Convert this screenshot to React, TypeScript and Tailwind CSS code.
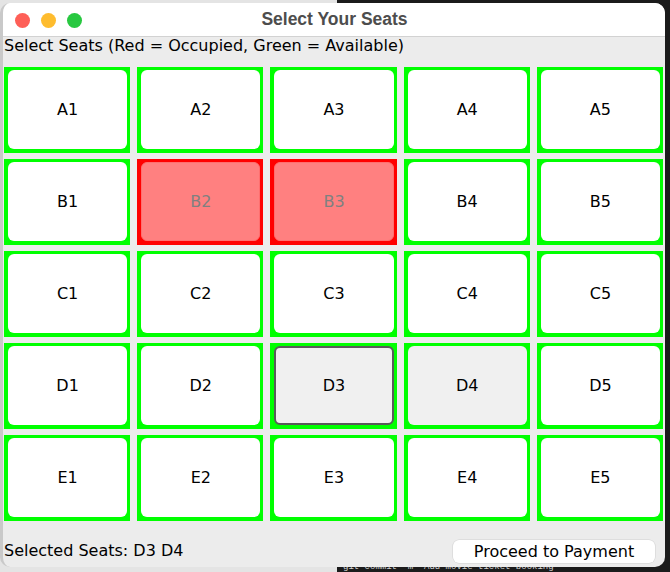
import React, { useState } from "react";

type SeatState = "free" | "taken" | "picked";

const rows = ["A", "B", "C", "D", "E"];
const cols = [1, 2, 3, 4, 5];
const occupied = ["B2", "B3"];

const Seat: React.FC<{ id: string; state: SeatState; focused: boolean; onClick: () => void }> = ({
  id,
  state,
  focused,
  onClick,
}) => {
  const taken = state === "taken";
  return (
    <div
      className={`h-[86px] pt-[3px] pr-[3px] pb-[4px] pl-[4px] ${
        taken ? "bg-[#ff0000] p-[4px]" : "bg-[#00ff00]"
      }`}
    >
      <button
        onClick={onClick}
        disabled={taken}
        className={`w-full h-full flex items-center justify-center rounded-[6px] text-[16px] ${
          taken
            ? "bg-[#ff8080] text-[#808080] border border-[#ff6f6f]"
            : state === "picked"
            ? "bg-[#f0f0f0] text-black"
            : "bg-white text-black"
        } ${focused ? "border-2 border-[#5a5a5a]" : ""}`}
      >
        {id}
      </button>
    </div>
  );
};

const App: React.FC = () => {
  const [picked, setPicked] = useState<string[]>(["D3", "D4"]);
  const [focus, setFocus] = useState("D3");

  const toggle = (id: string) => {
    setFocus(id);
    setPicked((p) => (p.includes(id) ? p.filter((x) => x !== id) : [...p, id]));
  };

  return (
    <div
      className="relative w-[670px] h-[572px] overflow-hidden flex"
      style={{ fontFamily: '"DejaVu Sans", "Liberation Sans", sans-serif' }}
    >
      {/* desktop behind the window */}
      <div className="w-[337px] h-full bg-[#e4e4e4]" />
      <div className="flex-1 h-full bg-[#1b1b1b] relative">
        <div className="absolute left-[6px] top-[562px] text-[9px] leading-[10px] text-[#cfcfcf] whitespace-nowrap font-mono">
          git commit -m "Add movie ticket booking"
        </div>
      </div>

      {/* window */}
      <div className="absolute left-0 top-[3px] w-[665px] h-[564px] rounded-[10px] overflow-hidden bg-[#ececec] border-l-[3px] border-[#c9c9c9] flex flex-col">
        <div className="relative h-[34px] shrink-0 bg-white border-b border-[#d2d2d2] flex items-center justify-center">
          <div className="absolute left-[12px] top-[10px] flex gap-[11px]">
            <span className="w-[15px] h-[15px] rounded-full bg-[#fe5f57]" />
            <span className="w-[15px] h-[15px] rounded-full bg-[#febc2e]" />
            <span className="w-[15px] h-[15px] rounded-full bg-[#28c840]" />
          </div>
          <span
            className="ml-[1px] text-[17.5px] font-bold text-[#4d4d4d]"
            style={{ fontFamily: '"Liberation Sans", Arial, sans-serif' }}
          >
            Select Your Seats
          </span>
        </div>

        <div className="px-[1px] text-[16px] leading-[18px] text-black">
          Select Seats (Red = Occupied, Green = Available)
        </div>

        <div className="mt-[12px] ml-[1px] mr-[2px] grid grid-cols-5 gap-x-[7px] gap-y-[6px]">
          {rows.map((r) =>
            cols.map((c) => {
              const id = `${r}${c}`;
              const state: SeatState = occupied.includes(id)
                ? "taken"
                : picked.includes(id)
                ? "picked"
                : "free";
              return (
                <Seat key={id} id={id} state={state} focused={focus === id} onClick={() => toggle(id)} />
              );
            })
          )}
        </div>

        <div className="flex-1 flex items-end justify-between pl-[1px] pr-[10px] pb-[4px]">
          <span className="text-[16px] leading-[18px] mb-[3px] text-black">
            Selected Seats: {picked.join(" ")}
          </span>
          <button className="w-[202px] h-[23px] rounded-[6px] bg-white text-[16px] leading-[20px] text-black shadow-[0_0_0_0.5px_#d0d0d0]">
            Proceed to Payment
          </button>
        </div>
      </div>
    </div>
  );
};

export default App;
